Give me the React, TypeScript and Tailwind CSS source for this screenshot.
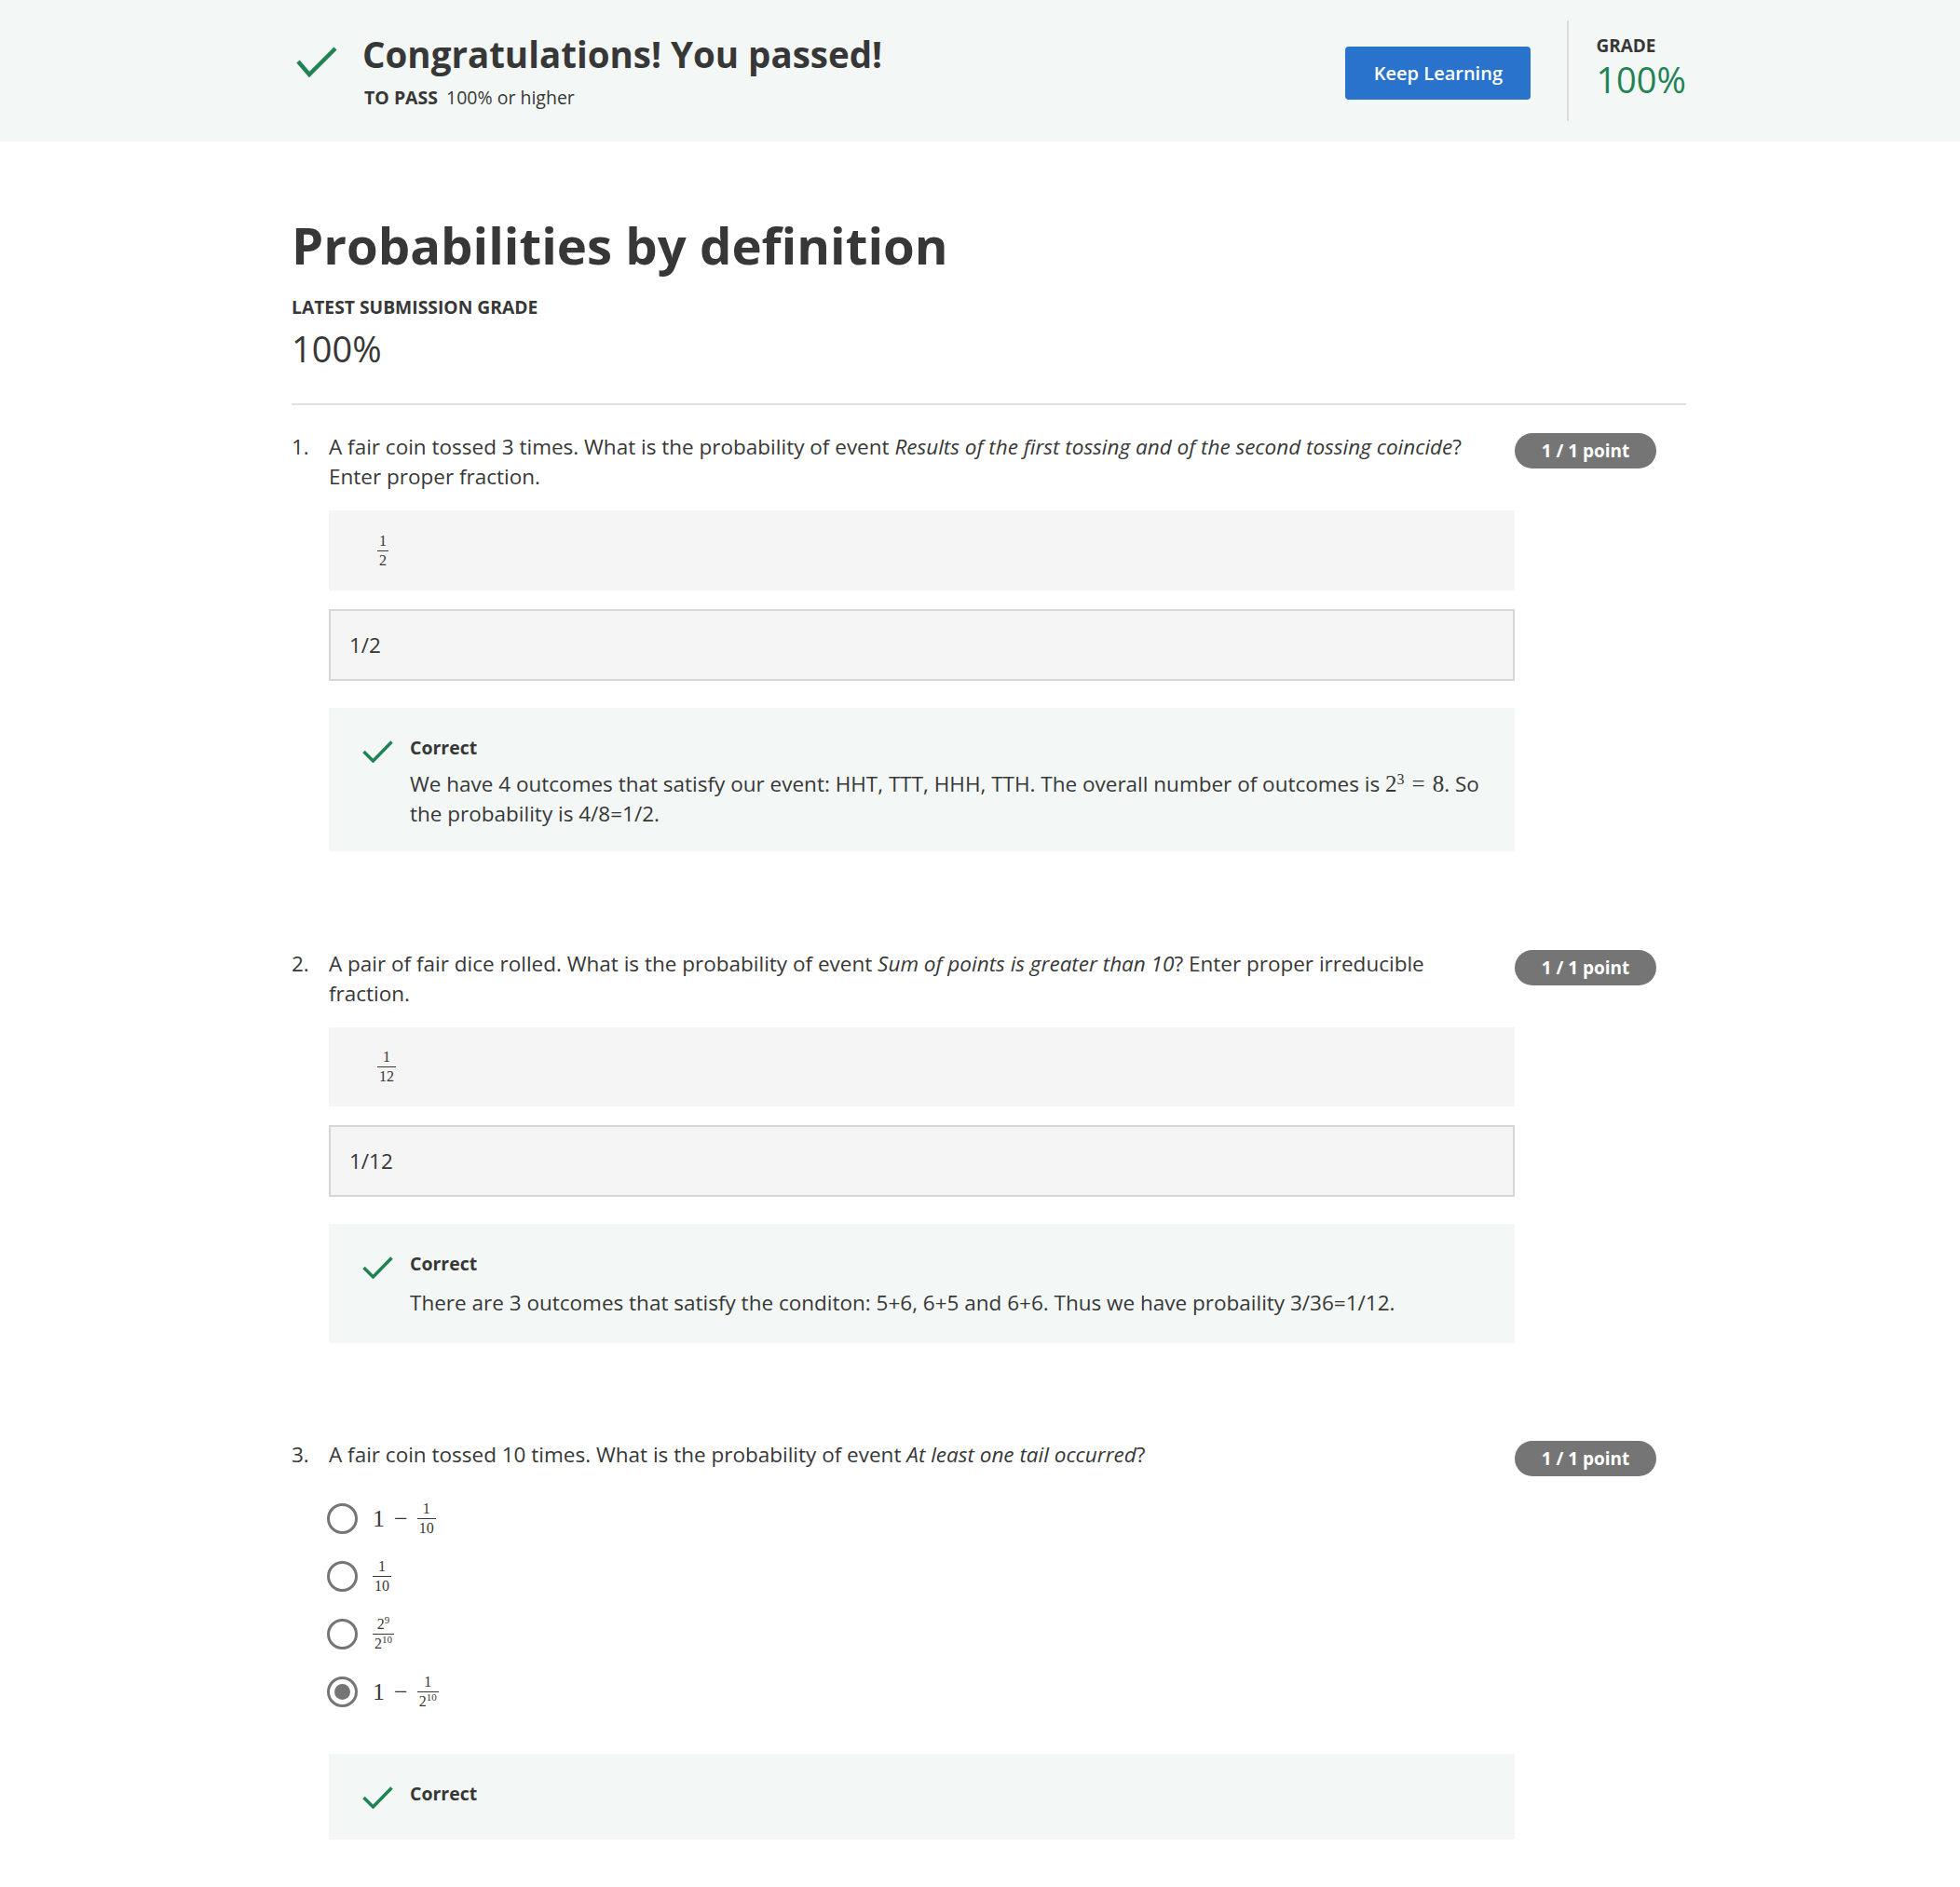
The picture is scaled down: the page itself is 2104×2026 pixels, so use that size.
import React from "react";

const GREEN = "#1f8354";

function BigCheck() {
  return (
    <svg className="ml-[5px] mt-[13px] h-[36px] w-[44px] shrink-0" viewBox="0 0 44 36">
      <polyline points="2,18 14,32 42,4" fill="none" stroke={GREEN} strokeWidth="4.5" />
    </svg>
  );
}

function SmallCheck() {
  return (
    <svg className="mt-[6px] h-[24px] w-[33px] shrink-0" viewBox="0 0 33 24">
      <polyline points="1.5,12 11.5,22 31.5,1.5" fill="none" stroke={GREEN} strokeWidth="3.5" />
    </svg>
  );
}

function Frac({ n, d, size = "text-[16px]" }: { n: React.ReactNode; d: React.ReactNode; size?: string }) {
  return (
    <span className={`inline-flex flex-col items-center align-middle leading-none font-['Liberation_Serif',serif] ${size}`}>
      <span className="px-[2px] pb-[2px]">{n}</span>
      <span className="w-full border-t-[1.5px] border-[#3a3a3a] px-[2px] pt-[2px] text-center">{d}</span>
    </span>
  );
}

function Badge() {
  return (
    <div className="flex h-[38px] w-[152px] items-center justify-center rounded-full bg-[#757575] text-[19px] font-bold text-white">
      1 / 1 point
    </div>
  );
}

function Feedback({ children, pb, mt = "mt-[30px]" }: { children?: React.ReactNode; pb: string; mt?: string }) {
  return (
    <div className={`${mt} flex bg-[#f3f8f6] pl-[36px] pr-[20px] pt-[29px] ${pb}`}>
      <SmallCheck />
      <div className="ml-[18px]">
        <div className="text-[19.5px] font-bold leading-[28px]">Correct</div>
        {children}
      </div>
    </div>
  );
}

function Question({ num, text, children }: { num: string; text: React.ReactNode; children: React.ReactNode }) {
  return (
    <section className="flex">
      <div className="w-[40px] text-[22.5px] leading-[32px]">{num}</div>
      <div className="w-[1273px]">
        <p className="pr-[14px] text-[22.5px] leading-[32px]">{text}</p>
        {children}
      </div>
      <div className="flex w-[184px] justify-end pr-[32px]">
        <div className="pt-[1px]">
          <Badge />
        </div>
      </div>
    </section>
  );
}

function Radio({ checked }: { checked?: boolean }) {
  return (
    <span className="flex h-[33px] w-[33px] shrink-0 items-center justify-center rounded-full border-[3px] border-[#757575]">
      {checked && <span className="h-[17px] w-[17px] rounded-full bg-[#757575]" />}
    </span>
  );
}

function Option({ checked, children }: { checked?: boolean; children: React.ReactNode }) {
  return (
    <div className="-ml-[2px] flex h-[60px] items-center">
      <Radio checked={checked} />
      <div className="ml-[16px] flex items-center font-['Liberation_Serif',serif] text-[26px]">{children}</div>
    </div>
  );
}

const Minus = () => <span className="mx-[10px]">−</span>;

export default function App() {
  return (
    <div className="min-h-[2026px] bg-white font-['Open_Sans',sans-serif] text-[#373737]">
      <header className="h-[152px] bg-[#f3f8f6]">
        <div className="ml-[313px] flex h-full w-[1497px] items-center">
          <div className="flex flex-1 items-start">
            <BigCheck />
            <div className="ml-[27px]">
              <h1 className="text-[38.5px] font-bold leading-[46px]">Congratulations! You passed!</h1>
              <div className="ml-[2px] mt-[11px] flex items-baseline gap-[9px] text-[19.5px] leading-[26px]">
                <span className="font-bold">TO PASS</span>
                <span>100% or higher</span>
              </div>
            </div>
          </div>
          <button className="mt-[5px] flex h-[57px] w-[199px] items-center justify-center rounded-[4px] bg-[#2a73cc] text-[20px] font-semibold text-white">
            Keep Learning
          </button>
          <div className="ml-[39px] h-[108px] w-[2px] bg-[#dcdcdc]" />
          <div className="ml-[29px] self-start pt-[37px]">
            <div className="text-[19px] font-bold leading-[24px]">GRADE</div>
            <div className="mt-[1px] text-[38px] leading-[46px] text-[#1f8354]">100%</div>
          </div>
        </div>
      </header>

      <main className="ml-[313px] w-[1497px] pb-[52px] pt-[77px]">
        <h2 className="text-[54.5px] font-bold leading-[68px]">Probabilities by definition</h2>
        <div className="mt-[21px] text-[19.3px] font-bold leading-[24px]">LATEST SUBMISSION GRADE</div>
        <div className="mt-[9px] text-[38px] leading-[46px]">100%</div>
        <div className="mt-[36px] h-[2px] bg-[#e1e1e1]" />

        <div className="mt-[29px]">
          <Question
            num="1."
            text={
              <>
                A fair coin tossed 3 times. What is the probability of event{" "}
                <i>Results of the first tossing and of the second tossing coincide</i>? Enter proper fraction.
              </>
            }
          >
            <div className="mt-[20px] flex h-[86px] items-center bg-[#f5f5f5] pl-[52px]">
              <Frac n="1" d="2" />
            </div>
            <div className="mt-[20px] flex h-[77px] items-center border-2 border-[#d6d6d6] bg-[#f5f5f5] pl-[20px] text-[22.5px]">
              1/2
            </div>
            <Feedback pb="pb-[24px]" mt="mt-[29px]">
              <p className="mt-[9px] text-[22.5px] leading-[32px]">
                We have 4 outcomes that satisfy our event: HHT, TTT, HHH, TTH. The overall number of outcomes is{" "}
                <span className="font-['Liberation_Serif',serif] text-[25px]">
                  2<sup className="text-[16px]">3</sup>
                  <span className="mx-[8px]">=</span>8
                </span>
                . So the probability is 4/8=1/2.
              </p>
            </Feedback>
          </Question>
        </div>

        <div className="mt-[105px]">
          <Question
            num="2."
            text={
              <>
                A pair of fair dice rolled. What is the probability of event <i>Sum of points is greater than 10</i>? Enter
                proper irreducible fraction.
              </>
            }
          >
            <div className="mt-[20px] flex h-[85px] items-center bg-[#f5f5f5] pl-[52px]">
              <Frac n="1" d="12" />
            </div>
            <div className="mt-[20px] flex h-[77px] items-center border-2 border-[#d6d6d6] bg-[#f5f5f5] pl-[20px] text-[22.5px]">
              1/12
            </div>
            <Feedback pb="pb-[27px]" mt="mt-[29px]">
              <p className="mt-[12px] text-[22.5px] leading-[32px]">
                There are 3 outcomes that satisfy the conditon: 5+6, 6+5 and 6+6. Thus we have probaility 3/36=1/12.
              </p>
            </Feedback>
          </Question>
        </div>

        <div className="mt-[104px]">
          <Question
            num="3."
            text={
              <>
                A fair coin tossed 10 times. What is the probability of event <i>At least one tail occurred</i>?
              </>
            }
          >
            <div className="mt-[22px] flex flex-col gap-[2px]">
              <Option>
                1<Minus />
                <Frac n="1" d="10" />
              </Option>
              <Option>
                <Frac n="1" d="10" />
              </Option>
              <Option>
                <Frac
                  n={
                    <>
                      2<sup className="text-[11px]">9</sup>
                    </>
                  }
                  d={
                    <>
                      2<sup className="text-[11px]">10</sup>
                    </>
                  }
                />
              </Option>
              <Option checked>
                1<Minus />
                <Frac
                  n="1"
                  d={
                    <>
                      2<sup className="text-[11px]">10</sup>
                    </>
                  }
                />
              </Option>
            </div>
            <div className="mt-[37px]">
              <Feedback pb="pb-[33px]" mt="mt-[0px]" />
            </div>
          </Question>
        </div>
      </main>
    </div>
  );
}
